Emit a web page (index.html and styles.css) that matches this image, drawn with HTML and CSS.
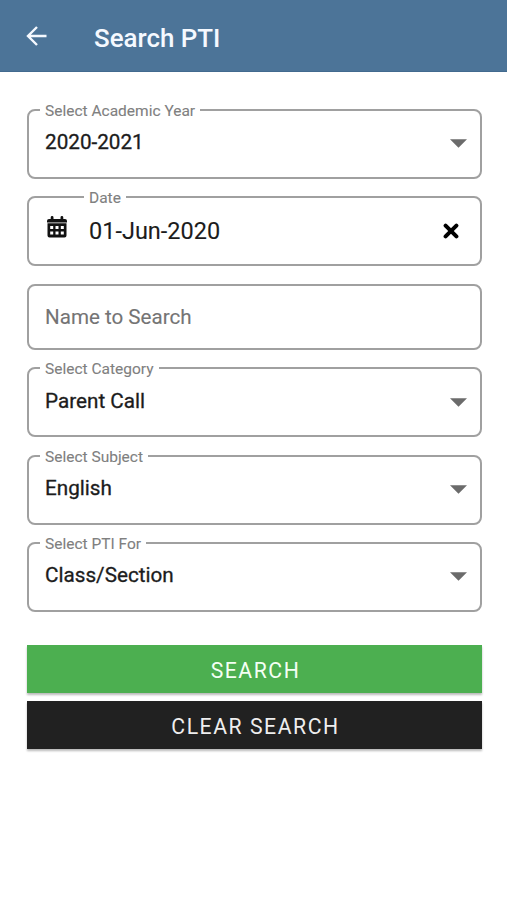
FILE: index.html
```html
<!DOCTYPE html>
<html lang="en">
<head>
<meta charset="utf-8">
<title>Search PTI</title>
<link rel="stylesheet" href="styles.css">
</head>
<body>
<header class="bar">
  <svg class="back" viewBox="0 0 22 22"><path d="M20.500 11H2M11 2L2 11l9 9"/></svg>
  <h1 class="title">Search PTI</h1>
</header>
<main class="form">
  <div class="field">
    <span class="label">Select Academic Year</span>
    <span class="value">2020-2021</span>
    <svg class="caret" viewBox="0 0 16 8"><path d="M0 0h16L8 8z"/></svg>
  </div>
  <div class="field date">
    <span class="label">Date</span>
    <svg class="calendar" viewBox="0 0 20 22"><path fill-rule="evenodd" d="M3.700 3V1.500a1.400 1.400 0 0 1 2.800 0V3h7V1.500a1.400 1.400 0 0 1 2.800 0V3H18q2 0 2 2v1.500H0V5q0-2 2-2zM.5 7.300h19v12.200q0 2-2 2h-15q-2 0-2-2zM3.200 10v3h3v-3zM8.500 10v3h3v-3zM13.800 10v3h3v-3zM3.200 15.500v3h3v-3zM8.500 15.500v3h3v-3zM13.800 15.500v3h3v-3z"/></svg>
    <span class="value">01-Jun-2020</span>
    <svg class="clear" viewBox="0 0 16 16"><path d="M2.600 2.600l10.800 10.800M13.400 2.600L2.600 13.400"/></svg>
  </div>
  <div class="field name"><span class="value">Name to Search</span></div>
  <div class="field">
    <span class="label">Select Category</span>
    <span class="value">Parent Call</span>
    <svg class="caret" viewBox="0 0 16 8"><path d="M0 0h16L8 8z"/></svg>
  </div>
  <div class="field">
    <span class="label">Select Subject</span>
    <span class="value">English</span>
    <svg class="caret" viewBox="0 0 16 8"><path d="M0 0h16L8 8z"/></svg>
  </div>
  <div class="field">
    <span class="label">Select PTI For</span>
    <span class="value">Class/Section</span>
    <svg class="caret" viewBox="0 0 16 8"><path d="M0 0h16L8 8z"/></svg>
  </div>
  <button class="button search">SEARCH</button>
  <button class="button reset">CLEAR SEARCH</button>
</main>
</body>
</html>
```
FILE: styles.css
```css
* { box-sizing: border-box; }
body { margin: 0; background: #fff; font-family: Roboto, "Liberation Sans", sans-serif; }
.bar { display: flex; align-items: center; height: 72px; padding: 4px 26px 0; background: #4c7498; border-bottom: 1px solid #426a8f; color: #f5f9ff; }
.back { width: 22px; height: 22px; margin-top: -4px; fill: none; stroke: currentColor; stroke-width: 2.4; }
.title { margin: 0 0 0 46px; font-size: 25.9px; line-height: 32px; font-weight: 500; }
.form { display: flex; flex-direction: column; padding: 37px 25px 0 27px; }
.field { position: relative; display: flex; align-items: center; height: 70px; margin-bottom: 17.3px; padding: 0 13px 3.600px 16px; border: 2px solid #a0a0a0; border-radius: 8px; }
.label { position: absolute; top: -9px; left: 11px; padding: 0 5px; background: #fff; color: #808080; font-size: 15.5px; line-height: 18px; -webkit-text-stroke: 0.1px; }
.value { flex: 1; font-size: 20.7px; line-height: 28px; color: #1c1c1c; -webkit-text-stroke: 0.3px; }
.caret { width: 17px; height: 9px; fill: #6b6b6b; margin-top: 3px; }
.date { padding: 0 21px 0 18px; }
.date .label { left: 55px; }
.date .value { margin-left: 22px; font-size: 23.5px; -webkit-text-stroke: 0.1px; }
.calendar { width: 20px; height: 22px; margin-top: -8px; fill: #111; }
.clear { width: 16px; height: 16px; fill: none; stroke: #000; stroke-width: 4; stroke-linecap: round; }
.name { height: 66.600px; padding-bottom: 0; }
.name .value { font-size: 20.6px; color: #747474; -webkit-text-stroke: 0.1px; }
.button { height: 48px; margin: 0 0 8px; padding: 3px 0 0 2px; border: 0; color: #f4fff4; font: 400 21.2px/28px Roboto, sans-serif; letter-spacing: 1.55px; box-shadow: 0 2px 2px #bbb; }
.search { margin-top: 16px; background: #4caf50; }
.reset { background: #212121; color: #eee; }
```
